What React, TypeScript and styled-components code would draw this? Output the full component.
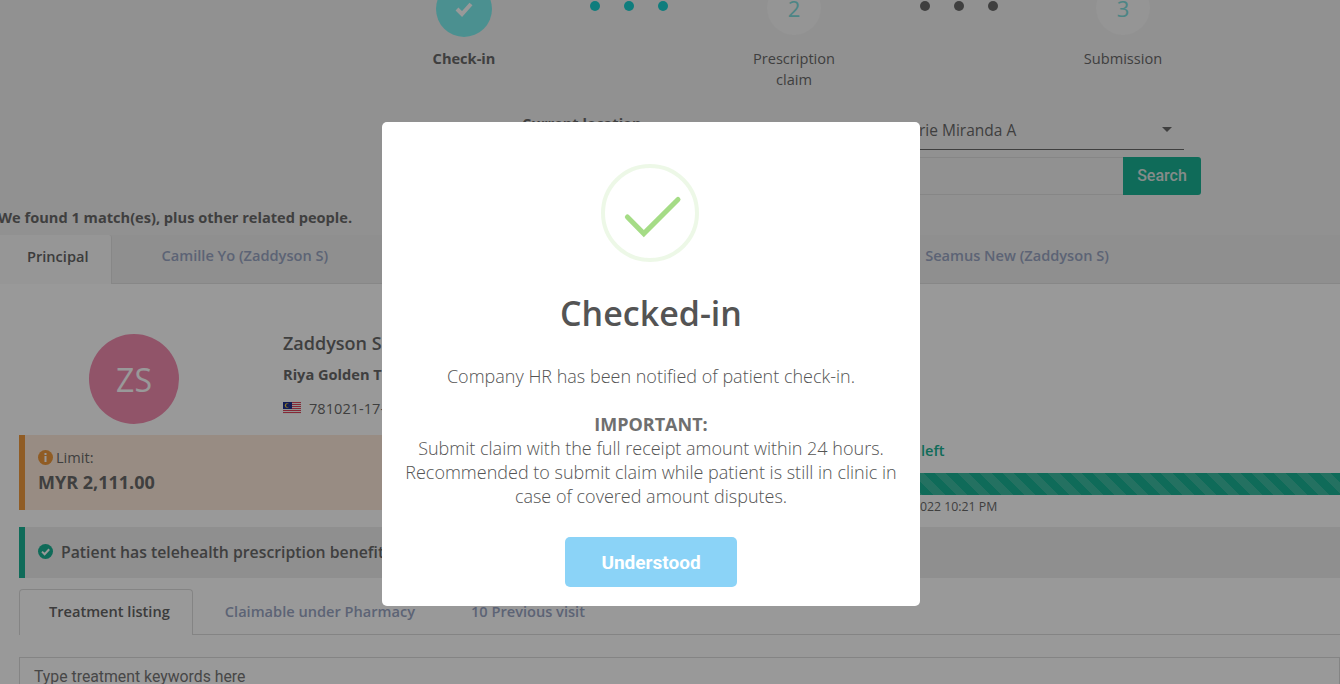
import React, { ReactElement } from 'react';
import styled, { createGlobalStyle } from 'styled-components';

const GlobalStyle = createGlobalStyle`
  html, body {
    margin: 0;
    height: 100%;
    overflow: hidden;
    background: #fff;
    font-family: 'Open Sans', 'Liberation Sans', sans-serif;
    color: #6a6a6a;
  }
  * { box-sizing: border-box; }
`;

const Page = styled.div`
  height: 684px;
  overflow: hidden;
  font-size: 14.6px;
`;

const Header = styled.div`
  background: #f2f2f2;
`;

const Stepper = styled.div`
  display: grid;
  grid-template-columns: 120px 210px 120px 209px 120px;
  margin-top: -19px;
  padding-left: 404px;
`;

const Step = styled.div`
  display: flex;
  flex-direction: column;
  align-items: center;
  text-align: center;
`;

const StepCircle = styled.div<{ $done?: boolean }>`
  width: ${(p) => (p.$done ? 56 : 54)}px;
  height: ${(p) => (p.$done ? 56 : 54)}px;
  border-radius: 50%;
  background: ${(p) => (p.$done ? '#7df1f1' : '#f8f8f8')};
  color: #7fdede;
  display: flex;
  align-items: center;
  justify-content: center;
  font-size: 22px;
  margin-bottom: ${(p) => (p.$done ? 11 : 13)}px;
`;

const StepLabel = styled.div<{ $done?: boolean }>`
  font-weight: ${(p) => (p.$done ? 700 : 400)};
  line-height: 21px;
  width: 100px;
`;

const Dots = styled.div`
  display: flex;
  justify-content: center;
  gap: 24px;
  padding-top: 20px;
`;

const Dot = styled.span<{ $active?: boolean }>`
  width: 10px;
  height: 10px;
  border-radius: 50%;
  background: ${(p) => (p.$active ? '#19d0d0' : '#6a6a6a')};
`;

const LocationBlock = styled.div`
  display: grid;
  grid-template-columns: 278px 384px;
  margin: 22px 0 0 522px;
`;

const LocationLabel = styled.div`
  font-weight: 700;
  padding-top: 1px;
`;

const SelectBox = styled.div`
  height: 38px;
  border-bottom: 1px solid #6a6a6a;
  display: flex;
  align-items: center;
  justify-content: space-between;
  padding: 0 12px 2px 119px;
  font-size: 15.5px;
  color: #6a6a6a;
`;

const Caret = styled.span`
  width: 0;
  height: 0;
  border-left: 5px solid transparent;
  border-right: 5px solid transparent;
  border-top: 5px solid #6a6a6a;
`;

const SearchRow = styled.div`
  display: flex;
  height: 38px;
  margin: 7px 0 0 522px;
  width: 679px;
`;

const SearchField = styled.div`
  flex: 1;
  border: 1px solid #e0e0e0;
  border-right: 0;
`;

const SearchButton = styled.div`
  width: 78px;
  padding-bottom: 1px;
  background: #1ab394;
  border-radius: 0 3px 3px 0;
  color: #dfe8e6;
  font-family: Roboto, sans-serif;
  font-weight: 500;
  font-size: 16px;
  display: flex;
  align-items: center;
  justify-content: center;
`;

const MatchNote = styled.div`
  font-weight: 700;
  line-height: 20px;
  margin: 12px 0 8px -2px;
`;

const PersonTabs = styled.div`
  display: flex;
  height: 49px;
  background: #eee;
  border-bottom: 1px solid #e2e2e2;
`;

const PersonTab = styled.div<{ $active?: boolean }>`
  display: flex;
  align-items: center;
  padding: ${(p) => (p.$active ? '0 22px 8px 27px' : '0 50px 8px')};
  font-weight: 600;
  background: ${(p) => (p.$active ? '#fafafa' : 'transparent')};
  color: ${(p) => (p.$active ? '#646464' : '#9aa6c4')};
  border-right: ${(p) => (p.$active ? '1px solid #e2e2e2' : '0')};
  height: ${(p) => (p.$active ? '49px' : 'auto')};
  border-top-right-radius: 3px;
`;

const TabGap = styled.div`
  flex: 0 0 497px;
`;

const Profile = styled.div`
  display: flex;
  gap: 104px;
  height: 101px;
  margin-top: 50px;
  padding-left: 89px;
`;

const Avatar = styled.div`
  width: 90px;
  height: 90px;
  border-radius: 50%;
  background: #f28cb0;
  color: #fff;
  font-size: 32px;
  display: flex;
  align-items: center;
  justify-content: center;
`;

const ProfileText = styled.div`
  display: flex;
  flex-direction: column;
  margin-top: -1px;
`;

const PersonName = styled.div`
  font-size: 18px;
  font-weight: 600;
  line-height: 20px;
  margin-bottom: 11px;
`;

const PersonOrg = styled.div`
  font-weight: 700;
  line-height: 20px;
  margin-bottom: 14px;
`;

const PersonId = styled.div`
  display: flex;
  align-items: center;
  gap: 8px;
  line-height: 20px;
`;

const LimitRow = styled.div`
  display: grid;
  grid-template-columns: 861px 1fr;
  gap: 20px;
  margin-left: 19px;
  height: 75px;
`;

const LimitCard = styled.div`
  height: 75px;
  background: #fdeadb;
  border-left: 6px solid #f0993c;
  padding: 13px;
`;

const LimitCaption = styled.div`
  display: flex;
  align-items: center;
  gap: 3px;
  line-height: 18px;
`;

const LimitValue = styled.div`
  font-size: 18px;
  font-weight: 700;
  line-height: 25px;
  margin-top: 4px;
`;

const Usage = styled.div`
  padding-top: 5px;
`;

const UsageText = styled.div`
  padding-left: 21px;
  font-weight: 600;
  line-height: 20px;
  color: #1ab394;
`;

const UsageBar = styled.div`
  height: 22px;
  margin-top: 13px;
  background: repeating-linear-gradient(45deg, #1ab394 0 8px, #3cbca2 8px 16px);
`;

const UsageDate = styled.div`
  padding-left: 20px;
  font-size: 12.3px;
  line-height: 16px;
  margin-top: 4px;
`;

const BenefitAlert = styled.div`
  display: flex;
  align-items: center;
  gap: 8px;
  height: 51px;
  margin: 17px 0 0 19px;
  padding: 0 0 2px 13px;
  background: #eee;
  border-left: 6px solid #1ab394;
  font-size: 15.8px;
  font-weight: 600;
`;

const TreatmentTabs = styled.div`
  display: flex;
  height: 46px;
  margin: 11px 0 0 19px;
  border-bottom: 1px solid #ddd;
`;

const TreatmentTab = styled.div<{ $active?: boolean }>`
  display: flex;
  align-items: center;
  height: 46px;
  padding: ${(p) => (p.$active ? '0 22px 4px 29px' : '0 28px 2px')};
  font-weight: 600;
  color: ${(p) => (p.$active ? '#646464' : '#9aa6c4')};
  background: ${(p) => (p.$active ? '#fff' : 'transparent')};
  border: ${(p) => (p.$active ? '1px solid #ddd' : '0')};
  border-bottom: 0;
  margin-right: ${(p) => (p.$active ? '4px' : '0')};
  border-radius: 4px 4px 0 0;
`;

const KeywordBox = styled.div`
  margin: 22px 0 0 19px;
  height: 40px;
  border: 1px solid #ddd;
  padding: 9px 14px;
  font-family: Roboto, sans-serif;
  font-size: 15.8px;
  line-height: 20px;
  color: #777;
`;

const Backdrop = styled.div`
  position: fixed;
  inset: 0;
  background: rgba(0, 0, 0, 0.4);
  padding: 122px 0 0 382px;
`;

const Modal = styled.div`
  width: 538px;
  height: 484px;
  background: #fff;
  border-radius: 5px;
  display: flex;
  flex-direction: column;
  align-items: center;
  padding-top: 42px;
  text-align: center;
`;

const SuccessSvg = styled.svg`
  margin-right: 2px;
`;

const Title = styled.h2`
  margin: 26px 0 0;
  font-size: 34px;
  font-weight: 600;
  line-height: 50px;
  color: #545454;
`;

const Message = styled.div`
  margin-top: 26px;
  padding: 0 20px;
  font-size: 18px;
  font-weight: 300;
  line-height: 24px;
  color: #545454;
  b {
    font-weight: 700;
    color: #6f6f6f;
  }
`;

const ConfirmButton = styled.div`
  width: 172px;
  height: 50px;
  margin-top: 29px;
  border-radius: 5px;
  background: #8bd3f7;
  color: #fff;
  font-family: Roboto, sans-serif;
  font-weight: 700;
  font-size: 19px;
  display: flex;
  align-items: center;
  justify-content: center;
`;

const SuccessIcon = (): ReactElement => (
  <SuccessSvg width='98' height='98' viewBox='0 0 98 98' fill='none'>
    <circle cx='49' cy='49' r='47' stroke='#a5dc86' strokeOpacity='0.2' strokeWidth='4' />
    <path d='M26.4 53 L42.8 69.6 L77 35.4' stroke='#a5dc86' strokeWidth='5' strokeLinecap='round' />
  </SuccessSvg>
);

const StepCheck = (): ReactElement => (
  <svg width='20' height='16' viewBox='0 0 20 16' fill='none'>
    <path d='M3 8 L8 13 L17 3' stroke='#fff' strokeWidth='4' />
  </svg>
);

const MalaysiaFlag = (): ReactElement => (
  <svg width='18' height='12' viewBox='0 0 18 12'>
    <rect width='18' height='12' fill='#f4f4f4' />
    {[0, 2, 4, 6, 8, 10].map((y) => (
      <rect key={y} y={y} width='18' height='1' fill='#e0455a' />
    ))}
    <rect width='9' height='7' fill='#1f2f8f' />
    <circle cx='4' cy='3.5' r='2.2' fill='#f2cf3a' />
    <circle cx='4.8' cy='3.5' r='1.8' fill='#1f2f8f' />
  </svg>
);

const InfoIcon = (): ReactElement => (
  <svg width='15' height='15' viewBox='0 0 15 15'>
    <circle cx='7.5' cy='7.5' r='7.5' fill='#f0993c' />
    <rect x='6.5' y='3' width='2' height='2' fill='#fff' />
    <rect x='6.5' y='6' width='2' height='6' fill='#fff' />
  </svg>
);

const BenefitIcon = (): ReactElement => (
  <svg width='15' height='15' viewBox='0 0 15 15' fill='none'>
    <circle cx='7.5' cy='7.5' r='7.5' fill='#1ab394' />
    <path d='M4 7.6 L6.6 10.2 L11.2 5.2' stroke='#fff' strokeWidth='2' />
  </svg>
);

const App = (): ReactElement => (
  <Page>
    <GlobalStyle />
    <Header>
      <Stepper>
        <Step>
          <StepCircle $done>
            <StepCheck />
          </StepCircle>
          <StepLabel $done>Check-in</StepLabel>
        </Step>
        <Dots>
          <Dot $active />
          <Dot $active />
          <Dot $active />
        </Dots>
        <Step>
          <StepCircle>2</StepCircle>
          <StepLabel>Prescription claim</StepLabel>
        </Step>
        <Dots>
          <Dot />
          <Dot />
          <Dot />
        </Dots>
        <Step>
          <StepCircle>3</StepCircle>
          <StepLabel>Submission</StepLabel>
        </Step>
      </Stepper>

      <LocationBlock>
        <LocationLabel>Current location</LocationLabel>
        <SelectBox>
          rie Miranda A
          <Caret />
        </SelectBox>
      </LocationBlock>
      <SearchRow>
        <SearchField />
        <SearchButton>Search</SearchButton>
      </SearchRow>

      <MatchNote>We found 1 match(es), plus other related people.</MatchNote>
      <PersonTabs>
        <PersonTab $active>Principal</PersonTab>
        <PersonTab>Camille Yo (Zaddyson S)</PersonTab>
        <TabGap />
        <PersonTab>Seamus New (Zaddyson S)</PersonTab>
      </PersonTabs>
    </Header>

    <Profile>
      <Avatar>ZS</Avatar>
      <ProfileText>
        <PersonName>Zaddyson S</PersonName>
        <PersonOrg>Riya Golden T</PersonOrg>
        <PersonId>
          <MalaysiaFlag />
          781021-17-
        </PersonId>
      </ProfileText>
    </Profile>

    <LimitRow>
      <LimitCard>
        <LimitCaption>
          <InfoIcon />
          Limit:
        </LimitCaption>
        <LimitValue>MYR 2,111.00</LimitValue>
      </LimitCard>
      <Usage>
        <UsageText>left</UsageText>
        <UsageBar />
        <UsageDate>022 10:21 PM</UsageDate>
      </Usage>
    </LimitRow>

    <BenefitAlert>
      <BenefitIcon />
      Patient has telehealth prescription benefit
    </BenefitAlert>

    <TreatmentTabs>
      <TreatmentTab $active>Treatment listing</TreatmentTab>
      <TreatmentTab>Claimable under Pharmacy</TreatmentTab>
      <TreatmentTab>10 Previous visit</TreatmentTab>
    </TreatmentTabs>
    <KeywordBox>Type treatment keywords here</KeywordBox>

    <Backdrop>
      <Modal>
        <SuccessIcon />
        <Title>Checked-in</Title>
        <Message>
          Company HR has been notified of patient check-in.
          <br />
          <br />
          <b>IMPORTANT:</b>
          <br />
          Submit claim with the full receipt amount within 24 hours.
          <br />
          Recommended to submit claim while patient is still in clinic in
          <br />
          case of covered amount disputes.
        </Message>
        <ConfirmButton>Understood</ConfirmButton>
      </Modal>
    </Backdrop>
  </Page>
);

export default App;
